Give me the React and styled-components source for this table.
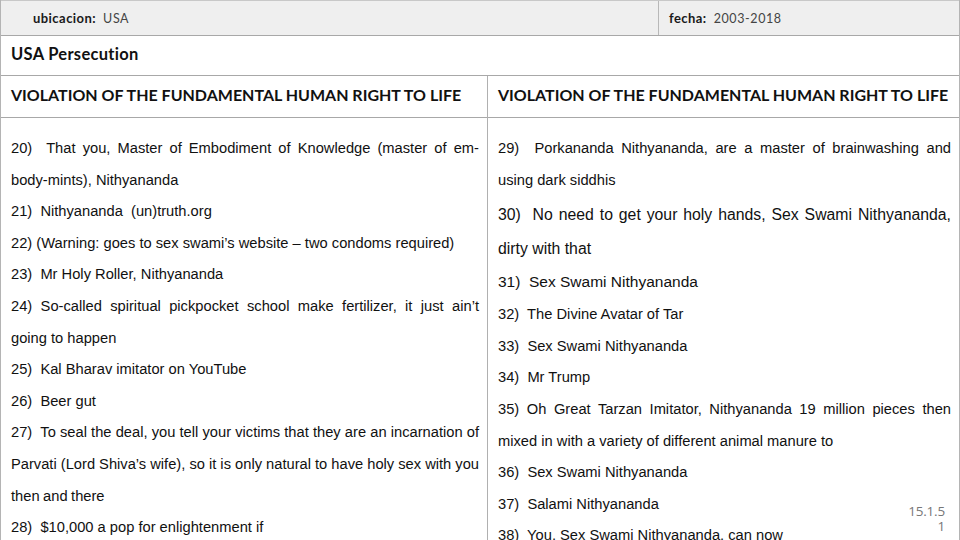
import React from "react";
import styled, { createGlobalStyle } from "styled-components";

const GlobalStyle = createGlobalStyle`
  html, body {
    margin: 0;
    padding: 0;
    background: #fff;
  }
  body {
    width: 960px;
    height: 540px;
    overflow: hidden;
  }
`;

const leftItems = [
  { text: "20)\u00a0 That you, Master of Embodiment of Knowledge (master of em-body-mints), Nithyananda" },
  { text: "21)\u00a0 Nithyananda\u00a0 (un)truth.org" },
  { text: "22) (Warning: goes to sex swami’s website – two condoms required)" },
  { text: "23)\u00a0 Mr Holy Roller, Nithyananda" },
  { text: "24) So-called spiritual pickpocket school make fertilizer, it just ain’t going to happen" },
  { text: "25)\u00a0 Kal Bharav imitator on YouTube" },
  { text: "26)\u00a0 Beer gut" },
  { text: "27)\u00a0 To seal the deal, you tell your victims that they are an incarnation of Parvati (Lord Shiva’s wife), so it is only natural to have holy sex with you then and there", tight: true },
  { text: "28)\u00a0 $10,000 a pop for enlightenment if" },
];

const rightItems = [
  { text: "29)\u00a0 Porkananda Nithyananda, are a master of brainwashing and using dark siddhis" },
  { text: "30)\u00a0 No need to get your holy hands, Sex Swami Nithyananda, dirty with that", size: "big" },
  { text: "31)\u00a0 Sex Swami Nithyananda", size: "mid" },
  { text: "32)\u00a0 The Divine Avatar of Tar" },
  { text: "33)\u00a0 Sex Swami Nithyananda" },
  { text: "34)\u00a0 Mr Trump" },
  { text: "35) Oh Great Tarzan Imitator, Nithyananda 19 million pieces then mixed in with a variety of different animal manure to" },
  { text: "36)\u00a0 Sex Swami Nithyananda" },
  { text: "37)\u00a0 Salami Nithyananda" },
  { text: "38)\u00a0 You, Sex Swami Nithyananda, can now" },
];

const App = () => {
  return (
    <Page>
      <GlobalStyle />
      <TopBar>
        <Field>
          <Label>ubicacion:</Label>
          <Value>USA</Value>
        </Field>
        <Field $divided>
          <Label>fecha:</Label>
          <Value>2003-2018</Value>
        </Field>
      </TopBar>

      <TitleRow>USA Persecution</TitleRow>

      <Columns>
        <Column>
          <ColHead>VIOLATION OF THE FUNDAMENTAL HUMAN RIGHT TO LIFE</ColHead>
          <ColBody>
            {leftItems.map((it, i) => (
              <Item key={i} $size={it.size} $tight={it.tight}>{it.text}</Item>
            ))}
          </ColBody>
        </Column>
        <Column $divided>
          <ColHead>VIOLATION OF THE FUNDAMENTAL HUMAN RIGHT TO LIFE</ColHead>
          <ColBody>
            {rightItems.map((it, i) => (
              <Item key={i} $size={it.size} $tight={it.tight}>{it.text}</Item>
            ))}
          </ColBody>
        </Column>
      </Columns>

      <PageNum>15.1.5<br />1</PageNum>
    </Page>
  );
};

const Page = styled.div`
  position: relative;
  width: 960px;
  height: 540px;
  box-sizing: border-box;
  border-left: 1px solid #b4b4b4;
  border-right: 1px solid #b4b4b4;
  overflow: hidden;
  font-family: "Liberation Sans", Arial, sans-serif;
  color: #111;
`;

const TopBar = styled.div`
  display: grid;
  grid-template-columns: 657px 1fr;
  background: #efefef;
  border-top: 1px solid #c8c8c8;
  border-bottom: 1px solid #a8a8a8;
  box-sizing: border-box;
  height: 36px;
`;

const Field = styled.div`
  display: flex;
  align-items: center;
  gap: 7px;
  padding-left: ${(p) => (p.$divided ? "10px" : "32px")};
  border-left: ${(p) => (p.$divided ? "1px solid #b8b8b8" : "none")};
  font-family: Lato, "Open Sans", sans-serif;
  color: #222;
`;

const Label = styled.span`
  font-size: 13px;
  font-weight: 700;
  letter-spacing: 0.45px;
  color: #1a1a1a;
`;

const Value = styled.span`
  font-size: 12.5px;
  font-weight: 400;
  color: #444;
  letter-spacing: 0.6px;
`;

const TitleRow = styled.div`
  height: 40px;
  box-sizing: border-box;
  display: flex;
  align-items: center;
  padding: 0 0 3px 10px;
  border-bottom: 1px solid #a8a8a8;
  font-family: Lato, "Open Sans", sans-serif;
  font-weight: 700;
  font-size: 16.5px;
  letter-spacing: 0.3px;
  color: #111;
`;

const Columns = styled.div`
  display: grid;
  grid-template-columns: 486px 1fr;
`;

const Column = styled.div`
  border-left: ${(p) => (p.$divided ? "1px solid #b0b0b0" : "none")};
  min-width: 0;
`;

const ColHead = styled.div`
  height: 42px;
  box-sizing: border-box;
  display: flex;
  align-items: center;
  padding: 0 0 4px 10px;
  border-bottom: 1px solid #a8a8a8;
  font-family: Lato, "Open Sans", sans-serif;
  font-weight: 700;
  font-size: 16px;
  color: #111;
  white-space: nowrap;
`;

const ColBody = styled.div`
  padding: 15px 8px 0 10px;
`;

const sizes = {
  big: { font: "15.8px", lh: "33.5px", mt: "2px" },
  mid: { font: "15.5px", lh: "34px", mt: "0" },
};

const Item = styled.p`
  margin: ${(p) => (sizes[p.$size] ? sizes[p.$size].mt : "0")} 0 0;
  font-family: "Liberation Sans", Arial, sans-serif;
  font-size: ${(p) => (sizes[p.$size] ? sizes[p.$size].font : "14.7px")};
  line-height: ${(p) => (sizes[p.$size] ? sizes[p.$size].lh : "31.6px")};
  word-spacing: ${(p) => (p.$tight ? "-0.6px" : "0")};
  text-align: justify;
  color: #111;
`;

const PageNum = styled.div`
  position: absolute;
  right: 14px;
  bottom: 6px;
  text-align: right;
  font-family: "Open Sans", "Liberation Sans", sans-serif;
  font-size: 13.5px;
  line-height: 15px;
  letter-spacing: -0.2px;
  color: #777;
`;

export default App;
